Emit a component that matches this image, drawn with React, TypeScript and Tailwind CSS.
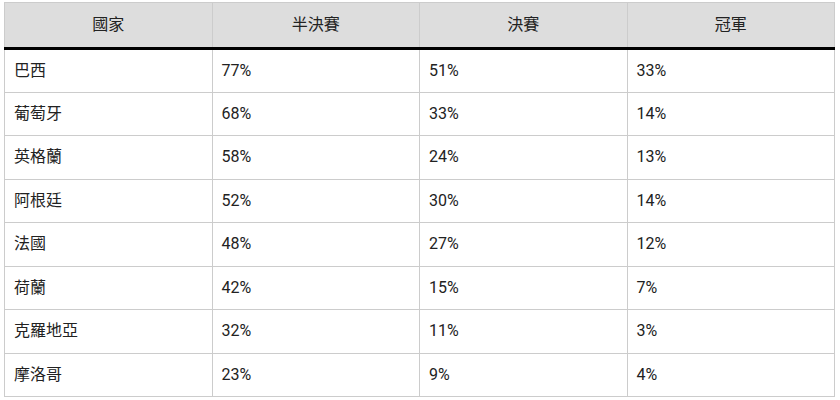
import React from "react";

const rows: [string, string, string, string][] = [
  ["巴西", "77%", "51%", "33%"],
  ["葡萄牙", "68%", "33%", "14%"],
  ["英格蘭", "58%", "24%", "13%"],
  ["阿根廷", "52%", "30%", "14%"],
  ["法國", "48%", "27%", "12%"],
  ["荷蘭", "42%", "15%", "7%"],
  ["克羅地亞", "32%", "11%", "3%"],
  ["摩洛哥", "23%", "9%", "4%"],
];

export default function App() {
  return (
    <div
      className="w-[840px] h-[400px] bg-white pt-[2px] pl-[4px]"
      style={{ fontFamily: 'Roboto, "Noto Sans CJK TC", sans-serif' }}
    >
      <table className="w-[831px] border-collapse table-fixed text-[16px] text-[#222]">
        <thead>
          <tr className="bg-[#dddddd] h-[46px]">
            {["國家", "半決賽", "決賽", "冠軍"].map((h) => (
              <th key={h} className="border border-[#cccccc] border-b-black border-b-[3px] font-normal text-center p-0">
                {h}
              </th>
            ))}
          </tr>
        </thead>
        <tbody>
          {rows.map((r) => (
            <tr key={r[0]} className="h-[43.5px]">
              {r.map((c, i) => (
                <td key={i} className="border border-[#cccccc] px-[9px] py-0 text-left">
                  {c}
                </td>
              ))}
            </tr>
          ))}
        </tbody>
      </table>
    </div>
  );
}
